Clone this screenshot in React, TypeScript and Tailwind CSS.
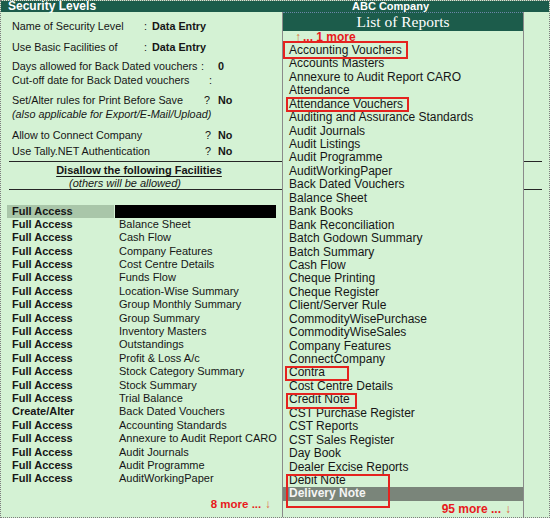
import React from "react";

// Reports shown in the popup list
const reports = [
  "Accounting Vouchers",
  "Accounts Masters",
  "Annexure to Audit Report CARO",
  "Attendance",
  "Attendance Vouchers",
  "Auditing and Assurance Standards",
  "Audit Journals",
  "Audit Listings",
  "Audit Programme",
  "AuditWorkingPaper",
  "Back Dated Vouchers",
  "Balance Sheet",
  "Bank Books",
  "Bank Reconciliation",
  "Batch Godown Summary",
  "Batch Summary",
  "Cash Flow",
  "Cheque Printing",
  "Cheque Register",
  "Client/Server Rule",
  "CommodityWisePurchase",
  "CommodityWiseSales",
  "Company Features",
  "ConnectCompany",
  "Contra",
  "Cost Centre Details",
  "Credit Note",
  "CST Purchase Register",
  "CST Reports",
  "CST Sales Register",
  "Day Book",
  "Dealer Excise Reports",
  "Debit Note",
];

// Facilities table on the left
const facilities: [string, string][] = [
  ["Full Access", "Balance Sheet"],
  ["Full Access", "Cash Flow"],
  ["Full Access", "Company Features"],
  ["Full Access", "Cost Centre Details"],
  ["Full Access", "Funds Flow"],
  ["Full Access", "Location-Wise Summary"],
  ["Full Access", "Group Monthly Summary"],
  ["Full Access", "Group Summary"],
  ["Full Access", "Inventory Masters"],
  ["Full Access", "Outstandings"],
  ["Full Access", "Profit & Loss A/c"],
  ["Full Access", "Stock Category Summary"],
  ["Full Access", "Stock Summary"],
  ["Full Access", "Trial Balance"],
  ["Create/Alter", "Back Dated Vouchers"],
  ["Full Access", "Accounting Standards"],
  ["Full Access", "Annexure to Audit Report CARO"],
  ["Full Access", "Audit Journals"],
  ["Full Access", "Audit Programme"],
  ["Full Access", "AuditWorkingPaper"],
];

function Line() {
  return <div className="ml-[8px] h-px w-[533px] bg-[#262626]" />;
}

export default function App() {
  return (
    <div className="relative h-[518px] w-[550px] overflow-hidden border border-dotted border-[#7d7d7d] bg-[#d4f2d4] font-['Liberation_Sans',Arial,sans-serif] text-[#161616]">
      {/* Title bar */}
      <div className="flex h-[11px] items-center bg-[#1c5c4b] font-bold leading-[11px] text-white">
        <span className="w-[351px] pl-[7px] text-[12px]">Security Levels</span>
        <span className="text-[11px]">ABC Company</span>
      </div>

      {/* Security level form */}
      <div className="whitespace-nowrap pl-[11px] text-[10.8px]">
        <div className="mt-[7px] flex h-[14px] leading-[14px]">
          <span className="w-[132px] shrink-0">Name of Security Level</span>
          <span className="w-[8px] shrink-0">:</span>
          <span className="font-bold">Data Entry</span>
        </div>
        <div className="mt-[6.5px] flex h-[14px] leading-[14px]">
          <span className="w-[132px] shrink-0">Use Basic Facilities of</span>
          <span className="w-[8px] shrink-0">:</span>
          <span className="font-bold">Data Entry</span>
        </div>
        <div className="mt-[5.5px] flex h-[14px] leading-[14px]">
          <span className="w-[189px] shrink-0">Days allowed for Back Dated vouchers</span>
          <span className="w-[17px] shrink-0">:</span>
          <span className="font-bold">0</span>
        </div>
        <div className="flex h-[14px] leading-[14px]">
          <span className="w-[197px] shrink-0">Cut-off date for Back Dated vouchers</span>
          <span>:</span>
        </div>
        <div className="mt-[6px] flex h-[14px] leading-[14px]">
          <span className="w-[192px] shrink-0">Set/Alter rules for Print Before Save</span>
          <span className="w-[14px] shrink-0">?</span>
          <span className="font-bold">No</span>
        </div>
        <div className="h-[14px] italic leading-[14px]">
          (also applicable for Export/E-Mail/Upload)
        </div>
        <div className="mt-[6.5px] flex h-[14px] leading-[14px]">
          <span className="w-[193px] shrink-0">Allow to Connect Company</span>
          <span className="w-[13px] shrink-0">?</span>
          <span className="font-bold">No</span>
        </div>
        <div className="mt-[2.5px] flex h-[14px] leading-[14px]">
          <span className="w-[193px] shrink-0">Use Tally.NET Authentication</span>
          <span className="w-[13px] shrink-0">?</span>
          <span className="font-bold">No</span>
        </div>
      </div>

      <div className="mt-[3px]">
        <Line />
      </div>
      <div className="mt-[1px] h-[14px] w-[276px] text-center text-[11px] font-bold leading-[14px] underline underline-offset-2">
        Disallow the following Facilities
      </div>
      <div className="h-[12px] w-[248px] text-center text-[11px] italic leading-[12px]">
        (others will be allowed)
      </div>
      <Line />

      {/* Facilities table */}
      <div className="mt-[14.5px] ml-[6px] whitespace-nowrap text-[11px]">
        <div className="flex h-[13.4px] leading-[13.4px]">
          <span className="w-[107px] shrink-0 bg-[#a9c6a9] pl-[5px] font-bold">Full Access</span>
          <span className="ml-[1px] w-[161px] bg-black" />
        </div>
        {facilities.map(([access, name], i) => (
          <div key={i} className="flex h-[13.4px] leading-[13.4px]">
            <span className="w-[107px] shrink-0 pl-[5px] font-bold">{access}</span>
            <span className="ml-[1px] pl-[4px]">{name}</span>
          </div>
        ))}
      </div>
      <div className="mt-[11px] h-[14px] w-[270px] text-right text-[11.5px] leading-[14px]">
        <span className="font-bold text-[#e8191c]">8 more ...</span>
        <span className="ml-[4px] text-[#e0603a]">↓</span>
      </div>

      {/* List of Reports popup */}
      <div className="absolute bottom-0 left-[281px] top-[11px] w-[242px] whitespace-nowrap border-x border-[#8a8a8a] bg-[#d4f2d4] text-[12px]">
        <div className="h-[18.5px] border-t border-dotted border-[#6b86a8] bg-[#1c5c4b] text-center font-['Liberation_Serif',serif] text-[15.5px] leading-[17px] text-white">
          List of Reports
        </div>
        <div className="h-[13.44px] pl-[12px] leading-[13.44px]">
          <span className="text-[#d9702f]">↑</span>
          <span className="ml-[2px] font-bold text-[#e8191c]">... 1 more</span>
        </div>
        {reports.map((r) => (
          <div key={r} className="h-[13.44px] pl-[6px] leading-[13.44px]">
            {r}
          </div>
        ))}
        <div className="h-[13.44px] bg-[#7a857a] pl-[6px] font-bold leading-[13.44px] text-[#f4f4f4]">
          Delivery Note
        </div>
        <div className="mt-[2px] h-[13.44px] pr-[12px] text-right leading-[13.44px]">
          <span className="font-bold text-[#e8191c]">95 more ...</span>
          <span className="ml-[4px] text-[#e0603a]">↓</span>
        </div>

        {/* Red highlight annotations */}
        <div className="absolute left-0 top-[29px] h-[18px] w-[125px] border-2 border-[#e5231f]" />
        <div className="absolute left-[3px] top-[85px] h-[15px] w-[123px] border-2 border-[#e5231f]" />
        <div className="absolute left-[2px] top-[354px] h-[15px] w-[64px] border-2 border-[#e5231f]" />
        <div className="absolute left-[3px] top-[381px] h-[16px] w-[71px] border-2 border-[#e5231f]" />
        <div className="absolute left-[3px] top-[462px] h-[34px] w-[104px] border-2 border-[#e5231f]" />
      </div>
    </div>
  );
}
